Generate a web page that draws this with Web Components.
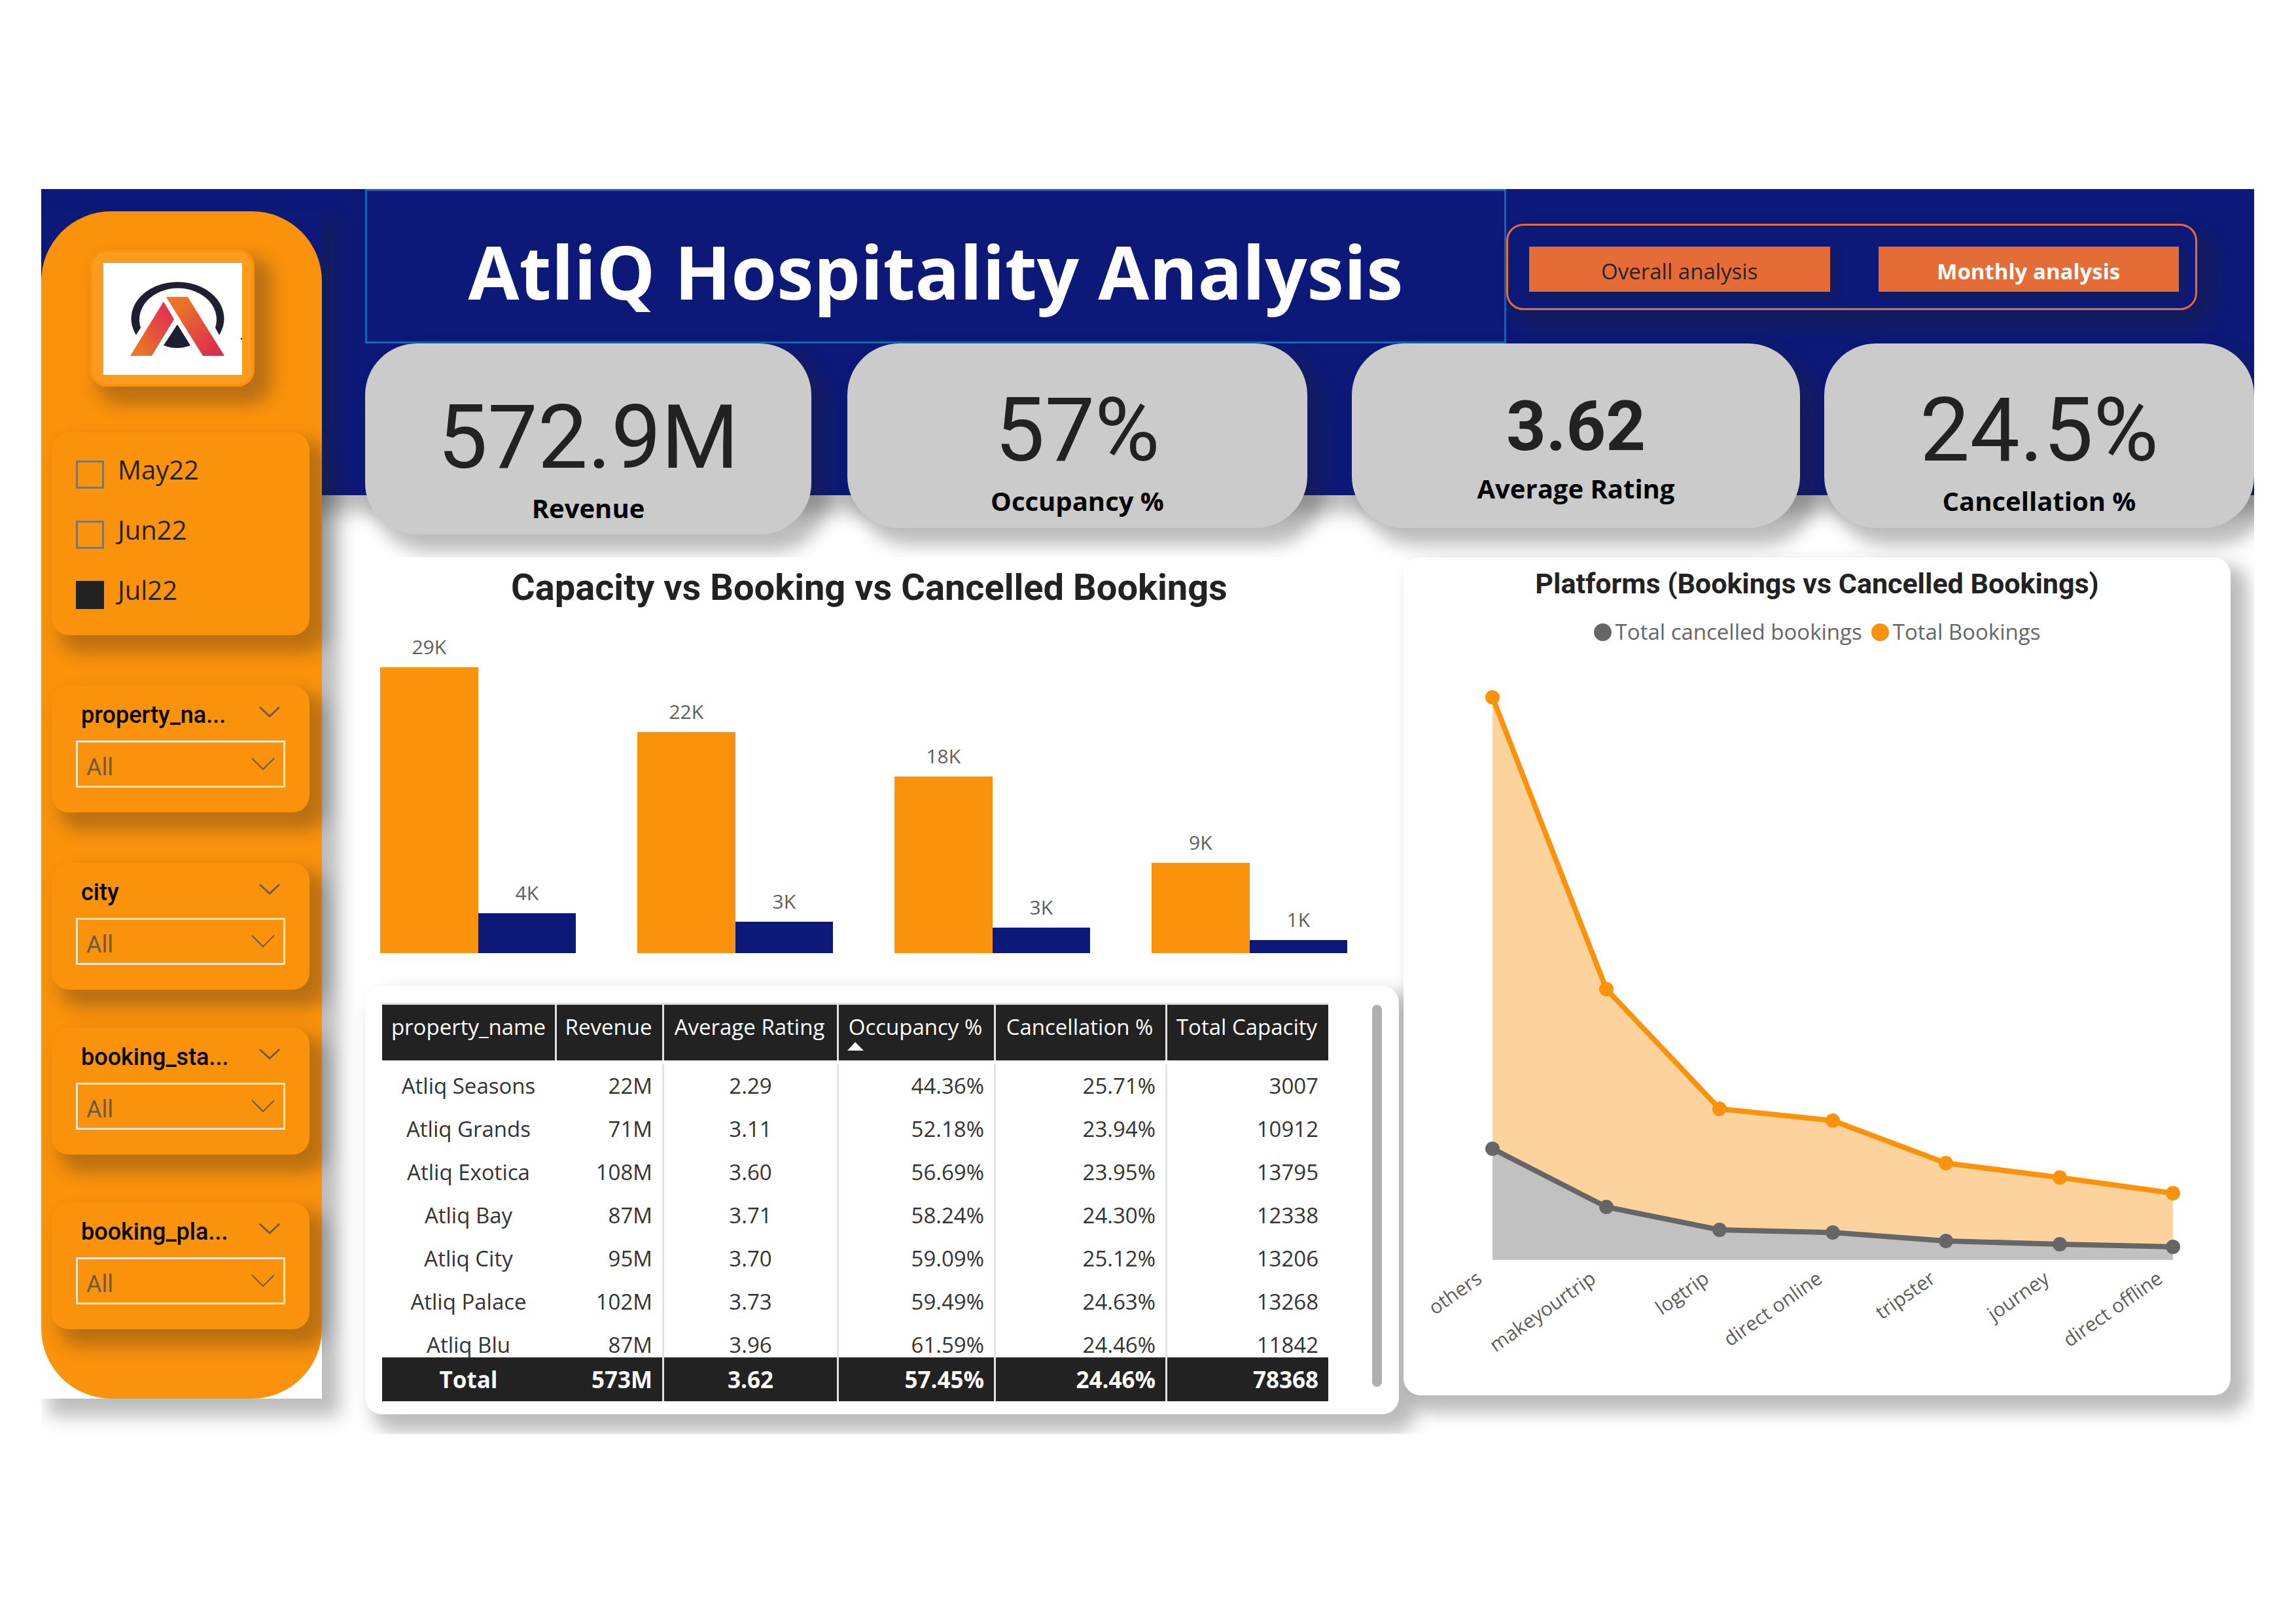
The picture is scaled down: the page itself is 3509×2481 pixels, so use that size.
<!DOCTYPE html>
<html lang="en">
<head>
<meta charset="utf-8">
<title>AtliQ Hospitality Analysis</title>
<style>
  :root {
    --navy: #0d1979;
    --orange: #fb920b;
    --ink: #252423;
    --text: "Open Sans", "Noto Sans", sans-serif;
    --display: Roboto, "Liberation Sans", sans-serif;
    --shadow: 19px 19px 26px 8px rgba(37, 36, 35, .3);
    --radius: 26px;
  }
  body { margin: 0; background: #fff; font-family: var(--text); color: var(--ink); }
</style>
</head>
<body>
<report-board></report-board>

<script>
const define = (name, html, setup) => {
  const template = document.createElement("template");
  template.innerHTML = html;
  customElements.define(name, class extends HTMLElement {
    constructor() {
      super();
      this.attachShadow({ mode: "open" }).append(template.content.cloneNode(true));
    }
    connectedCallback() { if (setup) setup(this, this.shadowRoot); }
  });
};

define("brand-logo", `
  <style>
    :host { display: block; box-sizing: border-box; width: 252px; padding: 17px 15px 14px 17px;
      border: 4px solid var(--orange); border-radius: var(--radius); background: #fd9b1e; box-shadow: var(--shadow); }
    svg { display: block; width: 100%; background: #fff; }
  </style>
  <svg viewBox="0 0 212 171" role="img" aria-label="AtliQ">
    <defs>
      <linearGradient id="left" x1="0" y1="1" x2="1" y2="0"><stop offset="0.1" stop-color="#ea7a22"/><stop offset="0.8" stop-color="#e2354f"/></linearGradient>
      <linearGradient id="right" x1="0" y1="0" x2="1" y2="1"><stop offset="0.2" stop-color="#e97327"/><stop offset="0.9" stop-color="#dc2b50"/></linearGradient>
    </defs>
    <path fill="#1e1f33" d="M50 110 A71 56 0 1 1 177 110 L171 99 A59 48 0 1 0 57 99 Z"/>
    <path fill="url(#left)" d="M92 59 L108 86 L74 142 L41 142 Z"/>
    <path fill="url(#right)" d="M96 52 L129 52 L185 142 L152 142 Z"/>
    <path fill="#1e1f33" d="M113 94 L133 126 Q113 134 92 126 Z"/>
    <path fill="#222" d="M209 117 L212 114 L212 117 Z"/>
  </svg>
`);

define("month-slicer", `
  <style>
    :host { display: block; padding: 29px 37px 5px; border-radius: var(--radius); background: var(--orange); box-shadow: var(--shadow); }
    label { display: flex; gap: 21px; height: 92px; font-size: 40px; line-height: 56px; }
    input { appearance: none; box-sizing: border-box; flex: none; width: 43px; height: 43px; margin: 14px 0 0; border: 3px solid #84755f; }
    input:checked { background: #222; border-color: #222; }
  </style>
  <label><input type="checkbox">May22</label>
  <label><input type="checkbox">Jun22</label>
  <label><input type="checkbox" checked>Jul22</label>
`);

define("drop-slicer", `
  <style>
    :host { display: block; box-sizing: border-box; min-height: 194px; padding: 20px 37px 0; border-radius: var(--radius);
      background: var(--orange); box-shadow: var(--shadow); font-family: var(--display); }
    header { display: flex; justify-content: space-between; padding: 0 8px; height: 64px; }
    label { font-size: 36px; font-weight: 500; line-height: 50px; color: #000; }
    button { display: block; height: 40px; padding: 0; border: 0; background: none; }
    svg { display: block; fill: none; stroke: #6b5c46; }
    button svg { margin-top: 2px; }
    .box { display: grid; align-items: center; }
    .box > * { grid-area: 1 / 1; }
    select { appearance: none; width: 100%; height: 72px; margin: 0; padding: 9px 13px 0; border: 3px solid #f9e7cd; border-radius: 0;
      background: none; color: #6b5c46; font: 36px var(--display); }
    .box svg { justify-self: end; margin-right: 16px; pointer-events: none; }
  </style>
  <header>
    <label for="pick"></label>
    <button type="button" aria-label="Collapse"><svg width="32" height="20" viewBox="0 0 32 20" stroke-width="3"><path d="M1 2 L16 16 L31 2"/></svg></button>
  </header>
  <div class="box">
    <select id="pick"><option>All</option></select>
    <svg width="36" height="22" viewBox="0 0 36 22" stroke-width="2"><path d="M1 2 L18 19 L35 2"/></svg>
  </div>
`, (host, root) => { root.querySelector("label").textContent = host.getAttribute("field"); });

define("side-bar", `
  <style>
    :host { display: block; box-shadow: var(--shadow); }
    nav { display: flex; flex-direction: column; padding: 58px 19px 106px 16px; border-radius: 107px; background: var(--orange); }
    brand-logo { margin: 0 0 70px 58px; }
    month-slicer, .loose { margin-bottom: 77px; }
    .tight { margin-bottom: 58px; }
    .mid { margin-bottom: 73px; }
  </style>
  <nav>
    <brand-logo></brand-logo>
    <month-slicer></month-slicer>
    <drop-slicer class="loose" field="property_na..."></drop-slicer>
    <drop-slicer class="tight" field="city"></drop-slicer>
    <drop-slicer class="mid" field="booking_sta..."></drop-slicer>
    <drop-slicer field="booking_pla..."></drop-slicer>
  </nav>
`);

define("page-tabs", `
  <style>
    :host { display: flex; gap: 74px; box-sizing: border-box; padding: 32px 25px 25px 32px; border: 3px solid #e66c37;
      border-radius: var(--radius); box-shadow: var(--shadow); }
    button { flex: 1; height: 69px; padding: 5px 0 0; border: 0; background: #e66c37; color: var(--ink);
      font: 33px var(--text); box-shadow: 8px 8px 10px 2px rgba(37, 36, 35, .3); }
    button[aria-current] { color: #fff; font-weight: 700; }
  </style>
  <button type="button">Overall analysis</button>
  <button type="button" aria-current="page">Monthly analysis</button>
`);

define("kpi-card", `
  <style>
    :host { display: flex; flex-direction: column; align-items: center; gap: 15px; box-sizing: border-box; min-height: 282px;
      padding: 67px 0 13px; border-radius: 79px; background: #cbcbcb; box-shadow: var(--shadow); }
    :host([tall]) { padding-top: 78px; }
    :host([strong]) { padding-top: 74px; }
    .value { font: 136px/132px var(--display); color: #222; }
    :host([strong]) .value { font-size: 106px; line-height: 106px; font-weight: 700; }
    .name { font-size: 40px; line-height: 54px; font-weight: 700; color: #000; }
  </style>
  <div class="value"><slot></slot></div>
  <div class="name"><slot name="name"></slot></div>
`);

define("bar-chart", `
  <style>
    :host { display: block; padding: 10px 0 50px; background: #fff; }
    h2 { margin: 0; padding-right: 39px; text-align: center; font: 700 56px/72px var(--display); color: #222; }
    .plot { display: grid; grid-template-columns: repeat(4, 1fr); column-gap: 94px; height: 523px; padding: 0 79px 0 23px; }
    .group { display: flex; align-items: flex-end; }
    figure { flex: 1; margin: 0; text-align: center; font-size: 30px; line-height: 42px; color: #605e5c; }
    figure div { margin-top: 10px; background: var(--orange); }
    figure + figure div { background: var(--navy); }
  </style>
  <h2>Capacity vs Booking vs Cancelled Bookings</h2>
  <div class="plot"></div>
`, (host, root) => {
  const groups = [
    [["29K", 437], ["4K", 61]],
    [["22K", 338], ["3K", 48]],
    [["18K", 270], ["3K", 39]],
    [["9K", 138], ["1K", 20]]
  ];
  root.querySelector(".plot").innerHTML = groups.map(bars =>
    `<div class="group">${bars.map(([label, h]) =>
      `<figure><figcaption>${label}</figcaption><div style="height:${h}px"></div></figure>`).join("")}</div>`).join("");
});

define("property-table", `
  <style>
    :host { display: flex; align-items: flex-start; justify-content: space-between; box-sizing: border-box; padding: 26px 26px 20px 26px;
      border-radius: var(--radius); background: #fff; box-shadow: var(--shadow); }
    .view { height: 609px; overflow: hidden; }
    table { width: 1446px; table-layout: fixed; border-collapse: separate; border-spacing: 0; font-size: 33px; line-height: 44px; color: #333; }
    th, td { box-sizing: border-box; padding: 0 15px; text-align: right; font-weight: 400; white-space: nowrap; border-left: 3px solid #e3e3e3; }
    th:first-child, td:first-child, td:nth-child(3), tfoot th { text-align: center; }
    th:first-child, td:first-child { border-left: 0; }
    td:nth-child(2) { border-left-color: transparent; }
    thead { position: sticky; top: 0; }
    thead th { height: 88px; padding: 12px 3px 0 0; vertical-align: top; text-align: center; background: #222; color: #fff; border-top: 3px solid #dcdfdc; }
    thead th:first-child { padding-right: 0; }
    thead svg { display: block; margin: 1px 0 0 13px; }
    tbody td { height: 66px; }
    tbody::before { content: ""; display: table-row; height: 6px; }
    tfoot { position: sticky; bottom: 0; }
    tfoot th, tfoot td { height: 67px; background: #222; color: #fff; font-size: 35px; font-weight: 700; }
    tfoot td:nth-child(2) { border-left-color: #222; }
    .track { width: 15px; height: 584px; margin-top: 3px; border-radius: 8px; background: #b0afae; }
  </style>
  <div class="view">
    <table>
      <colgroup><col style="width:264px"><col style="width:164px"><col style="width:267px"><col style="width:240px"><col style="width:262px"><col style="width:249px"></colgroup>
      <thead><tr><th>property_name</th><th>Revenue</th><th>Average Rating</th>
        <th>Occupancy %<svg width="25" height="13" viewBox="0 0 25 13"><path fill="#fff" d="M0 13 L12 0 L25 13 Z"/></svg></th>
        <th>Cancellation %</th><th>Total Capacity</th></tr></thead>
      <tbody></tbody>
      <tfoot><tr><th>Total</th><td>573M</td><td>3.62</td><td>57.45%</td><td>24.46%</td><td>78368</td></tr></tfoot>
    </table>
  </div>
  <div class="track"></div>
`, (host, root) => {
  const rows = [
    ["Atliq Seasons", "22M", "2.29", "44.36%", "25.71%", "3007"],
    ["Atliq Grands", "71M", "3.11", "52.18%", "23.94%", "10912"],
    ["Atliq Exotica", "108M", "3.60", "56.69%", "23.95%", "13795"],
    ["Atliq Bay", "87M", "3.71", "58.24%", "24.30%", "12338"],
    ["Atliq City", "95M", "3.70", "59.09%", "25.12%", "13206"],
    ["Atliq Palace", "102M", "3.73", "59.49%", "24.63%", "13268"],
    ["Atliq Blu", "87M", "3.96", "61.59%", "24.46%", "11842"]
  ];
  root.querySelector("tbody").innerHTML = rows.map(r => `<tr>${r.map(c => `<td>${c}</td>`).join("")}</tr>`).join("");
});

define("platform-chart", `
  <style>
    :host { display: block; padding-top: 10px; border-radius: var(--radius); background: #fff; box-shadow: var(--shadow); }
    h2 { margin: 0 0 22px; text-align: center; font: 700 43px/60px var(--display); color: #222; }
    .legend { display: flex; justify-content: center; gap: 14px; font-size: 33px; line-height: 44px; color: #666; }
    .legend span { display: flex; align-items: center; gap: 6px; }
    i { width: 27px; height: 27px; border-radius: 50%; background: #666; }
    i.booked { background: var(--orange); }
    svg { display: block; width: 100%; }
    text { font: 30px var(--text); fill: #605e5c; text-anchor: end; }
  </style>
  <h2>Platforms (Bookings vs Cancelled Bookings)</h2>
  <div class="legend"><span><i></i>Total cancelled bookings</span><span><i class="booked"></i>Total Bookings</span></div>
  <svg viewBox="0 0 1264 1145"></svg>
`, (host, root) => {
  const names = ["others", "makeyourtrip", "logtrip", "direct online", "tripster", "journey", "direct offline"];
  const xs = [136, 310, 483, 656, 829, 1003, 1176];
  const base = 938;
  const series = [
    { ys: [78, 524, 707, 725, 790, 812, 836], line: "#fb920b", area: "#fcd39c" },
    { ys: [768, 857, 892, 896, 909, 914, 918], line: "#666", area: "#c1c1c1" }
  ];
  const points = s => s.ys.map((y, i) => `${xs[i]},${y}`).join(" ");
  root.querySelector("svg").innerHTML =
    series.map(s => `<polygon fill="${s.area}" points="${xs[0]},${base} ${points(s)} ${xs[6]},${base}"/>`).join("") +
    series.map(s => `<polyline fill="none" stroke="${s.line}" stroke-width="8" stroke-linejoin="round" points="${points(s)}"/>` +
      s.ys.map((y, i) => `<circle cx="${xs[i]}" cy="${y}" r="11" fill="${s.line}"/>`).join("")).join("") +
    names.map((n, i) => `<text transform="translate(${xs[i] - 14} ${base + 33}) rotate(-35)">${n}</text>`).join("");
});

define("report-board", `
  <style>
    :host { display: grid; grid-template-columns: 429px 1fr; column-gap: 66px; margin: 289px 64px 289px 63px; overflow: hidden; }
    .band { grid-area: 1 / 1 / 2 / -1; height: 468px; background: var(--navy); box-shadow: var(--shadow); }
    side-bar { grid-area: 1 / 1; align-self: start; margin-top: 34px; }
    main { grid-area: 1 / 2; padding-bottom: 30px; min-width: 0; }
    .top { display: grid; grid-template-columns: 1744fr 1056fr 87fr; align-items: start; }
    h1 { box-sizing: border-box; height: 236px; margin: 0; padding-top: 47px; border: 3px solid #1366b8;
      color: #fff; font-size: 113px; line-height: 150px; text-align: center; white-space: nowrap; }
    page-tabs { margin-top: 53px; }
    .kpis { display: grid; grid-template-columns: 682fr 55fr 703fr 68fr 685fr 37fr 657fr; align-items: start; }
    kpi-card:nth-child(2) { grid-column: 3; }
    kpi-card:nth-child(3) { grid-column: 5; }
    kpi-card:nth-child(4) { grid-column: 7; }
    .visuals { display: grid; grid-template-columns: 1580fr 1264fr; column-gap: 7px; align-items: start; padding: 35px 36px 0 0; }
    .visuals > * { min-width: 0; }
  </style>
  <div class="band"></div>
  <side-bar></side-bar>
  <main>
    <div class="top">
      <h1>AtliQ Hospitality Analysis</h1>
      <page-tabs></page-tabs>
    </div>
    <section class="kpis">
      <kpi-card tall>572.9M<span slot="name">Revenue</span></kpi-card>
      <kpi-card>57%<span slot="name">Occupancy %</span></kpi-card>
      <kpi-card strong>3.62<span slot="name">Average Rating</span></kpi-card>
      <kpi-card>24.5%<span slot="name">Cancellation %</span></kpi-card>
    </section>
    <section class="visuals">
      <div>
        <bar-chart></bar-chart>
        <property-table></property-table>
      </div>
      <platform-chart></platform-chart>
    </section>
  </main>
`);
</script>
</body>
</html>
